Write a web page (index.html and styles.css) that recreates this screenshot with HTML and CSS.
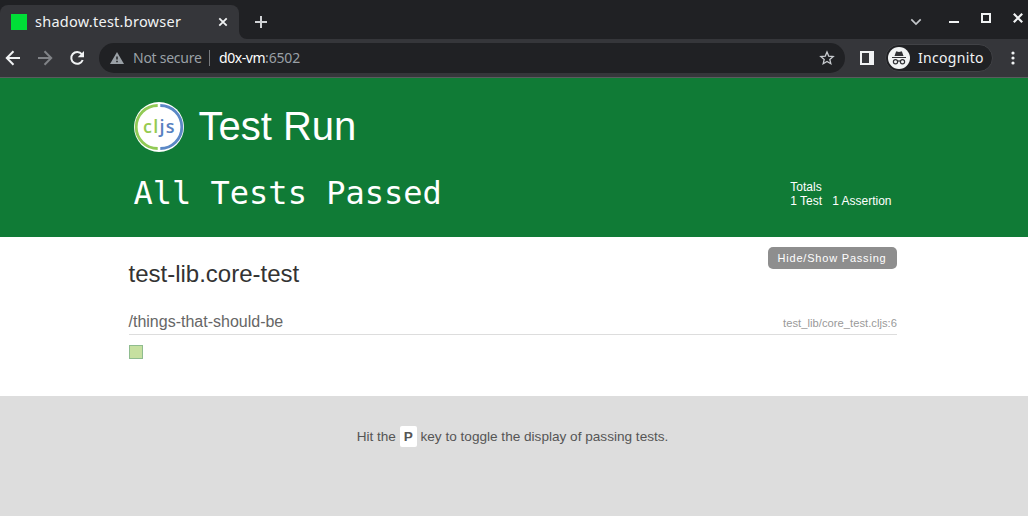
FILE: index.html
```
<!DOCTYPE html>
<html lang="en">
<head>
<meta charset="utf-8">
<title>shadow.test.browser</title>
<link rel="stylesheet" href="styles.css">
</head>
<body>
<div class="tabstrip">
  <div class="tab">
    <span class="favicon"></span>
    <span class="tab-title">shadow.test.browser</span>
    <svg class="tab-close" width="10" height="10" viewBox="0 0 10 10"><path d="M1.3 1.3l7.4 7.4M8.7 1.3L1.3 8.7" stroke="#f1f3f4" stroke-width="1.8"/></svg>
  </div>
  <svg class="new-tab" width="30" height="34" viewBox="0 0 30 34"><path d="M0 26V34H8A8 8 0 0 1 0 26Z" fill="#35363a"/><path d="M22 11V23M16 17H28" stroke="#d0d2d5" stroke-width="2"/></svg>
  <svg class="window-controls" width="122" height="39" viewBox="0 0 122 39" fill="none">
    <path d="M5.3 19.3l4.7 4.7 4.7-4.7" stroke="#c4c7cb" stroke-width="1.7"/>
    <path d="M43 22H53" stroke="#f1f3f4" stroke-width="2"/>
    <rect x="76" y="14" width="8" height="8" stroke="#f1f3f4" stroke-width="2"/>
    <path d="M107.8 13.8l8.4 8.4M116.2 13.8l-8.4 8.4" stroke="#f1f3f4" stroke-width="2.2"/>
  </svg>
</div>
<div class="toolbar">
  <svg class="nav" width="99" height="38" viewBox="0 0 99 38" fill="none" stroke-width="2">
    <path d="M20 19H7M13.5 12.3L6.8 19l6.7 6.7" stroke="#f1f3f4"/>
    <path d="M38 19H51M44.5 12.3l6.7 6.7-6.7 6.7" stroke="#818387"/>
    <path d="M81.8 15.2A5.9 5.9 0 1 0 82.7 21" stroke="#f1f3f4"/>
    <path d="M84 12V18.3H77.7Z" fill="#f1f3f4"/>
  </svg>
  <div class="omnibox">
    <svg class="warn" width="14" height="12" viewBox="0 0 14 12"><path d="M7 0L14 12H0Z" fill="#9aa0a6"/><path d="M7 4.5V7.500M7 8.700V10.300" stroke="#202124" stroke-width="1.500"/></svg>
    <span class="security">Not secure</span>
    <span class="divider"></span>
    <span class="host">d0x-vm</span><span class="port">:6502</span>
    <svg class="star" width="16" height="16" viewBox="0 0 16 16"><path d="M8 2L9.7 6.1 14.2 6.5 10.8 9.4 11.8 13.7 8 11.4 4.2 13.7 5.2 9.4 1.8 6.5 6.3 6.1Z" fill="none" stroke="#c9ccd0" stroke-width="1.3"/></svg>
  </div>
  <svg class="panel" width="14" height="14" viewBox="0 0 14 14"><rect x="1" y="1" width="12" height="12" fill="none" stroke="#f1f3f4" stroke-width="2"/><rect x="9" y="1" width="4" height="12" fill="#f1f3f4"/></svg>
  <div class="incognito">
    <svg width="22" height="22" viewBox="0 0 22 22"><circle cx="11" cy="11" r="11" fill="#f1f3f4"/><path d="M4 10H18V11H4ZM6.5 9L8 4.7Q8.3 4.2 9 4.4L11 4.9 13 4.4Q13.7 4.2 14 4.7L15.5 9Z" fill="#303135"/><g fill="none" stroke="#303135" stroke-width="1.2"><circle cx="7.5" cy="14.7" r="2.1"/><circle cx="14.5" cy="14.7" r="2.1"/><path d="M9.6 14.3Q11 13.5 12.4 14.3"/></g></svg>
    <span class="incognito-label">Incognito</span>
  </div>
  <svg class="menu" width="4" height="14" viewBox="0 0 4 14" fill="#f1f3f4"><circle cx="2" cy="2" r="1.6"/><circle cx="2" cy="7" r="1.6"/><circle cx="2" cy="12" r="1.6"/></svg>
</div>
<header class="report">
  <div class="brand">
    <svg width="50" height="50" viewBox="0 0 50 50">
      <circle cx="25" cy="25" r="25" fill="#fff"/>
      <g fill="none" stroke-width="2.8"><path d="M23.7 3.5A21.5 21.5 0 0 0 23.7 46.5" stroke="#91ca55"/><path d="M26.3 3.5A21.5 21.5 0 0 1 26.3 46.5" stroke="#5b88c6"/></g>
      <text class="logo-text" x="9" y="31" textLength="31.5"><tspan fill="#96ca50">cl</tspan><tspan fill="#5881c0">js</tspan></text>
    </svg>
    <h1>Test Run</h1>
  </div>
  <div class="summary">
    <span class="status">All Tests Passed</span>
    <div class="totals"><div>Totals</div><div class="counts"><span>1 Test</span><span>1 Assertion</span></div></div>
  </div>
</header>
<main>
  <div class="namespace"><h2>test-lib.core-test</h2><button class="toggle">Hide/Show Passing</button></div>
  <div class="test-head"><span class="test-name">/things-that-should-be</span><span class="source">test_lib/core_test.cljs:6</span></div>
  <div class="pass"></div>
</main>
<footer>Hit the <b class="key">P</b> key to toggle the display of passing tests.</footer>
</body>
</html>
```
FILE: styles.css
```
* { box-sizing: border-box; }
body { margin: 0; width: 1028px; height: 516px; overflow: hidden; background: #fff; font-family: "Liberation Sans", Arial, sans-serif; display: flex; flex-direction: column; }
svg { display: block; flex: none; }
span { white-space: nowrap; }

.tabstrip { height: 39px; flex: none; background: #202124; display: flex; align-items: flex-end; font: 15px "Noto Sans", sans-serif; }
.tab { width: 239px; height: 34px; padding: 0 11px; background: #35363a; border-radius: 8px 8px 0 0; display: flex; align-items: center; color: #f1f3f4; }
.favicon { width: 16px; height: 16px; margin-right: 8px; background: #00de37; }
.tab-title { letter-spacing: 0.26px; line-height: 32px; padding-bottom: 2px; font-size: 14.5px; }
.tab-close { margin-left: auto; }
.window-controls { margin-left: auto; }

.toolbar { height: 39px; flex: none; background: #35363a; border-bottom: 1px solid #5a5b5e; display: flex; align-items: center; font: 14px "Noto Sans", sans-serif; }
.omnibox { width: 746px; height: 30px; border-radius: 15px; background: #202124; display: flex; align-items: center; padding: 0 10px 0 11px; }
.security { margin-left: 9px; width: 69px; padding-bottom: 2px; color: #9aa0a6; letter-spacing: -0.26px; }
.divider { width: 1px; height: 16px; background: #77797d; margin: 0 9px 0 7px; }
.host { padding-bottom: 2px; color: #fff; letter-spacing: -0.45px; }
.port { padding-bottom: 2px; color: #9aa0a6; letter-spacing: -0.15px; }
.star { margin-left: auto; }
.panel { margin-left: 15px; }
.incognito { width: 108px; height: 28px; margin-left: 11px; padding-left: 2px; border: 1px solid #414246; border-radius: 14px; background: #202124; display: flex; align-items: center; color: #f1f3f4; }
.incognito-label { margin-left: 8px; padding-bottom: 2px; letter-spacing: 0.32px; }
.menu { margin-left: 17.5px; }

.report { height: 159px; flex: none; background: #107b36; color: #fff; padding: 24px 130px 0 134px; }
.brand { display: flex; align-items: center; }
h1 { margin: -2px 0 0 14.5px; font-size: 40px; font-weight: 400; line-height: 46px; }
.logo-text { font: 600 18px "Open Sans", sans-serif; }
.summary { display: flex; justify-content: space-between; margin-top: 22px; }
.status { margin-left: -0.5px; font: 32px/38px "DejaVu Sans Mono", monospace; }
.totals { width: 107.7px; padding: 6px 0 0; font-size: 12px; line-height: 14px; }
.counts { display: flex; gap: 10px; }

main { height: 159px; flex: none; padding: 10px 131px 0 128.5px; }
.namespace { height: 60px; display: flex; justify-content: space-between; align-items: flex-start; }
h2 { margin: 13px 0 0; font-size: 24px; line-height: 28px; font-weight: 400; color: #333; }
.toggle { width: 129px; height: 22px; padding: 0 1px 0 0; border: 0; border-radius: 5px; background: #8e8e8e; color: #fff; font: 11px "Liberation Sans", Arial, sans-serif; letter-spacing: 0.8px; }
.test-head { height: 28px; display: flex; justify-content: space-between; align-items: baseline; padding-top: 5px; border-bottom: 1px solid #ddd; }
.test-name { font-size: 16px; line-height: 19px; color: #666; }
.source { font-size: 11.2px; letter-spacing: 0.03px; color: #999; }
.pass { width: 14px; height: 14px; margin-top: 10px; border: 1px solid #8fbc8f; background: #c6e0a0; }

footer { flex: 1; background: #ddd; padding: 30px 3px 0 0; text-align: center; color: #555; font-size: 13.6px; line-height: 21px; }
.key { display: inline-block; width: 17px; height: 21px; border-radius: 2px; background: #fff; }
```
